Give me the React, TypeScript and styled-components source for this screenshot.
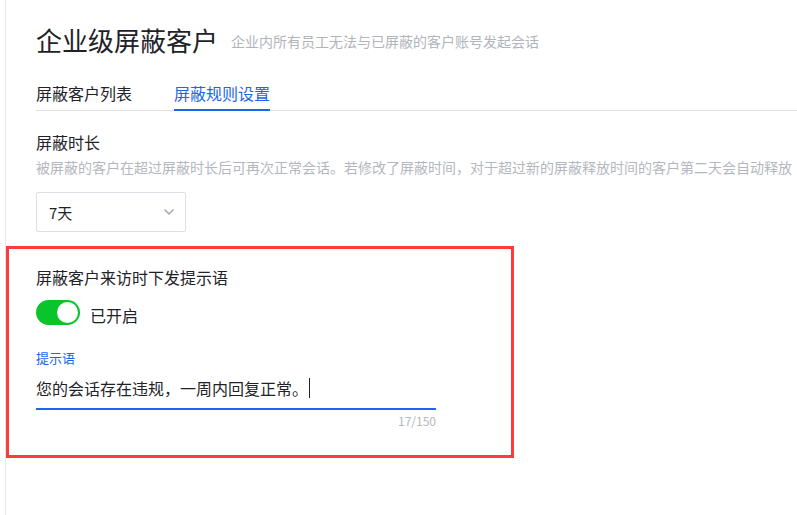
import React from "react";
import styled, { createGlobalStyle } from "styled-components";

const GlobalStyle = createGlobalStyle`
  html, body {
    margin: 0;
    padding: 0;
    background: #ffffff;
  }
  body {
    font-family: "Noto Sans CJK SC", "Noto Sans", "Liberation Sans", sans-serif;
    color: #1f2329;
  }
`;

// Page shell: thin sidebar edge on the left, content on the right
const Page = styled.div`
  display: flex;
  min-height: 515px;
  width: 797px;
  overflow: hidden;
`;

const SideEdge = styled.div`
  width: 5px;
  flex-shrink: 0;
  border-right: 1px solid #e6e7eb;
`;

const Main = styled.main`
  flex: 1;
  display: flex;
  flex-direction: column;
  min-width: 0;
`;

const Header = styled.div`
  display: flex;
  align-items: center;
  gap: 13px;
  padding: 22px 0 0 30px;
  height: 36px;
`;

const Title = styled.h1`
  margin: 0;
  font-size: 26px;
  font-weight: 400;
  line-height: 36px;
  color: #1f2329;
`;

const Subtitle = styled.span`
  font-size: 14px;
  line-height: 20px;
  color: #b1b4bb;
  margin-top: 1px;
`;

const TabBar = styled.div`
  display: flex;
  gap: 42px;
  margin: 23px 0 0 30px;
  border-bottom: 1px solid #dfe1e5;
`;

const Tab = styled.div<{ $active?: boolean }>`
  font-size: 16px;
  line-height: 24px;
  padding-bottom: 4px;
  margin-bottom: -1px;
  border-bottom: 2px solid ${(p) => (p.$active ? "#1a66ec" : "transparent")};
  color: ${(p) => (p.$active ? "#1a66ec" : "#1f2329")};
`;

const Section = styled.div`
  padding: 19px 0 0 30px;
`;

const FieldTitle = styled.div`
  font-size: 16px;
  line-height: 24px;
  color: #1f2329;
`;

const Hint = styled.div`
  margin-top: 2px;
  font-size: 14px;
  line-height: 22px;
  color: #b4b7be;
  white-space: nowrap;
`;

const Select = styled.div`
  margin-top: 14px;
  width: 150px;
  height: 40px;
  box-sizing: border-box;
  border: 1px solid #dcdfe5;
  border-radius: 2px;
  display: flex;
  align-items: center;
  justify-content: space-between;
  padding: 0 10px 0 12px;
  font-size: 15px;
  color: #1f2329;
`;

const Highlight = styled.div`
  margin: 14px 0 0 0;
  width: 508px;
  box-sizing: border-box;
  border: 3px solid #fd3b3b;
  padding: 16px 0 26px 27px;
`;

const ToggleRow = styled.div`
  display: flex;
  align-items: center;
  gap: 10px;
  margin-top: 9px;
`;

const Switch = styled.div<{ $on: boolean }>`
  position: relative;
  width: 44px;
  height: 25px;
  border-radius: 13px;
  background: ${(p) => (p.$on ? "#0ac42c" : "#c9cdd4")};

  &::after {
    content: "";
    position: absolute;
    top: 2px;
    left: ${(p) => (p.$on ? "21px" : "2px")};
    width: 21px;
    height: 21px;
    border-radius: 50%;
    background: #ffffff;
  }
`;

const SwitchLabel = styled.span`
  font-size: 16px;
  line-height: 24px;
  margin-top: 5px;
`;

const InputLabel = styled.div`
  margin-top: 21px;
  font-size: 13px;
  line-height: 20px;
  color: #1a66ec;
`;

const InputLine = styled.div`
  margin-top: 8px;
  width: 400px;
  display: flex;
  align-items: center;
  padding-bottom: 8px;
  border-bottom: 2px solid #1a66ec;
  font-size: 16px;
  line-height: 24px;
  color: #1f2329;
`;

const Caret = styled.span`
  display: inline-block;
  width: 1px;
  height: 20px;
  margin-left: 1px;
  background: #1f2329;
`;

const Counter = styled.div`
  width: 400px;
  margin-top: 3px;
  text-align: right;
  font-size: 12px;
  line-height: 16px;
  color: #b4b7be;
`;

const Chevron = () => (
  <svg width="12" height="8" viewBox="0 0 12 8">
    <polyline points="1.5,1.5 6,6 10.5,1.5" fill="none" stroke="#a3a7ae" strokeWidth="1.5" />
  </svg>
);

const App: React.FC = () => {
  return (
    <>
      <GlobalStyle />
      <Page>
        <SideEdge />
        <Main>
          <Header>
            <Title>企业级屏蔽客户</Title>
            <Subtitle>企业内所有员工无法与已屏蔽的客户账号发起会话</Subtitle>
          </Header>

          <TabBar>
            <Tab>屏蔽客户列表</Tab>
            <Tab $active>屏蔽规则设置</Tab>
          </TabBar>

          <Section>
            <FieldTitle>屏蔽时长</FieldTitle>
            <Hint>
              被屏蔽的客户在超过屏蔽时长后可再次正常会话。若修改了屏蔽时间，对于超过新的屏蔽释放时间的客户第二天会自动释放
            </Hint>
            <Select>
              <span>7天</span>
              <Chevron />
            </Select>
          </Section>

          <Highlight>
            <FieldTitle>屏蔽客户来访时下发提示语</FieldTitle>
            <ToggleRow>
              <Switch $on />
              <SwitchLabel>已开启</SwitchLabel>
            </ToggleRow>
            <InputLabel>提示语</InputLabel>
            <InputLine>
              <span>您的会话存在违规，一周内回复正常。</span>
              <Caret />
            </InputLine>
            <Counter>17/150</Counter>
          </Highlight>
        </Main>
      </Page>
    </>
  );
};

export default App;
